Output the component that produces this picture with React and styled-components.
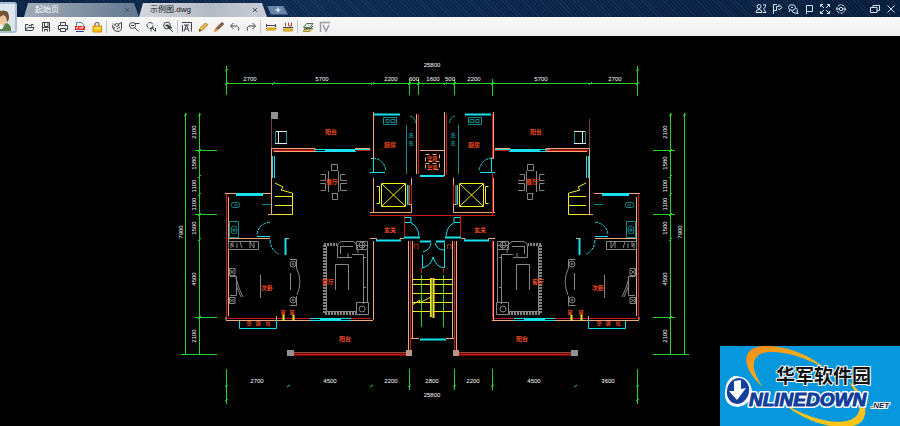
import React from "react";
import styled, { createGlobalStyle } from "styled-components";

const GlobalStyle = createGlobalStyle`
  * { box-sizing: border-box; }
  body {
    margin: 0;
    background: #000;
    font-family: "Liberation Sans", "Noto Sans CJK SC", sans-serif;
  }
`;

const Page = styled.div`
  min-height: 100vh;
  position: relative;
  display: flex;
  flex-direction: column;
  background: #000;
`;

const TitleBar = styled.header`
  display: flex;
  align-items: flex-end;
  height: 17px;
  padding-left: 24px;
  background:
    repeating-linear-gradient(45deg, rgba(90, 140, 200, 0.12) 0 1px, transparent 1px 3px),
    linear-gradient(90deg, #0a2140, #0e2a50 35%, #071c3a);
`;

const TabList = styled.nav`
  display: flex;
  align-items: flex-end;
`;

const Tab = styled.div`
  display: flex;
  align-items: center;
  width: ${(p) => (p.$active ? 128 : 115)}px;
  height: 14px;
  padding: 0 9px 0 11px;
  color: ${(p) => (p.$active ? "#101418" : "#fff")};
  background: ${(p) =>
    p.$active
      ? "linear-gradient(100deg, #d4d8de, #b4bac5 55%, #c9ced6)"
      : "linear-gradient(100deg, #a0acb9, #7c8c9f 60%, #627790)"};
  clip-path: polygon(4px 0, calc(100% - 5px) 0, 100% 100%, 0 100%);
`;

const TabLabel = styled.button`
  flex: 1;
  padding: 0;
  border: 0;
  background: none;
  color: inherit;
  font: 8px/12px "Liberation Sans", "Noto Sans CJK SC", sans-serif;
  text-align: left;
`;

const TabClose = styled.button`
  display: flex;
  padding: 0;
  border: 0;
  background: none;
  color: #4b5668;
`;

const NewTab = styled.button`
  display: flex;
  align-items: center;
  justify-content: center;
  align-self: center;
  width: 21px;
  height: 9px;
  padding: 0;
  border: 0;
  color: #fff;
  background: #6684a8;
  clip-path: polygon(0 0, 16px 0, 100% 100%, 4px 100%);
`;

const WindowTools = styled.div`
  display: flex;
  align-items: center;
  height: 17px;
  margin-left: auto;
  padding-right: 1px;
`;

const WindowButton = styled.button`
  display: flex;
  align-items: center;
  justify-content: center;
  width: 16px;
  height: 16px;
  margin-left: ${(p) => (p.$gap ? 18 : 0)}px;
  padding: 0;
  border: 0;
  background: none;
  color: #d5e3ef;
`;

const Avatar = styled.button`
  position: absolute;
  top: 2px;
  left: 0;
  width: 17px;
  height: 31px;
  padding: 0;
  border: 2px solid #a9bdd0;
  border-left: 0;
  border-radius: 0 3px 3px 0;
  background: #dce6ec;
  overflow: hidden;
`;

const Toolbar = styled.div`
  display: flex;
  align-items: center;
  height: 19px;
  padding-left: 20px;
  background: linear-gradient(#f8f8f6, #f0f0f2);
`;

const ToolGroup = styled.div`
  display: flex;
  padding-right: 1px;
  margin-right: 1px;
  border-right: ${(p) => (p.$last ? 0 : 1)}px solid #c2c2c6;
`;

const ToolButton = styled.button`
  display: flex;
  align-items: center;
  justify-content: center;
  width: ${(p) => (p.$narrow ? 16 : 17)}px;
  height: 13px;
  padding: 0;
  border: 0;
  background: none;
`;

const Canvas = styled.main`
  flex: 1;
  background: #000;
`;

const Drawing = styled.svg`
  display: block;
  width: 100%;
  height: auto;
`;

const Brand = styled.a`
  position: absolute;
  right: 0;
  bottom: 0;
  display: block;
  width: 180px;
  height: 80px;
  background: #0797dc;
`;

const BrandName = styled.text`
  font: 700 19px "Noto Sans CJK SC", sans-serif;
  fill: #111;
  stroke: #fff;
  stroke-width: 2px;
  stroke-linejoin: round;
  paint-order: stroke;
`;

const BrandWord = styled.text`
  font: italic 700 ${(p) => (p.$small ? 8 : 19)}px "Liberation Sans", sans-serif;
  fill: ${(p) => (p.$small ? "#15233b" : "#143f9b")};
  stroke: ${(p) => (p.$front ? "#143f9b" : "#fff")};
  stroke-width: ${(p) => (p.$front ? 1 : p.$small ? 2 : 4)}px;
  stroke-linejoin: round;
  paint-order: stroke;
`;

const Icon = ({ children, size = 12, color = "currentColor" }) => (
  <svg width={size} height={size} viewBox="0 0 12 12" fill="none" stroke={color} strokeWidth="1" aria-hidden="true">
    {children}
  </svg>
);

const INK = "#3c4248";

const toolGroups = [
  {
    name: "file",
    tools: [
      ["Open", <path d="M2.5 9.5V3.5H5L6 4.5H8.5V5.5M2.5 9.5L4.5 6.5H11L9.5 9.5ZM8 3.5H10V4.5" />],
      ["Save", <path d="M2.5 10.5V1.5H9.5V10.5M4.5 1.5V5.5H8M8 1.5V5.5M2.5 6.5H9.5M4.5 10.5V8.5H7.5V10.5" />],
      ["Print", <path d="M3.5 4V1.5H8.5V4M3 8.5H1.5V4.5H10.5V8.5H9M3.5 7.5H8.5V10.5H3.5Z" />],
      ["Export PDF", <><path d="M2.5 5V1.5H7.5L9.5 3.5V5" stroke="#4a83b8" /><path d="M1 5H11V9H1Z" fill="#e52822" stroke="none" /><path d="M3 8V6H4M6 6V8M8 8V6H9.5" stroke="#fff" /><path d="M2 10.5H10" stroke="#1f4c86" /></>],
      ["Lock", <><path d="M4 5V3Q4 1.5 6 1.5T8 3V5" stroke="#5b5140" /><path d="M2 5H10.5V11H2Z" fill="#f5c410" stroke="#d08b0e" /><path d="M3 7H9.5" stroke="#fff08a" /></>],
    ],
  },
  {
    name: "view",
    tools: [
      ["Pan", <path d="M2 2.5L4 4.5L5.5 2L7 3.5L10.5 1.5V5Q11 10 7 10.5Q3 10.5 2 7L4 6.5M2 7L1.5 4M5 6L8.5 4M6 8L9 6" />],
      ["Zoom out", <><circle cx="4.5" cy="4.5" r="3" /><path d="M7 7L10.5 10.5M7 2.5H11.5M3 4.5H6" /></>],
      ["Zoom in", <><circle cx="5" cy="4.5" r="3" strokeDasharray="5 1" /><path d="M7 7L10.5 10.5M6 10.5V7H9M10.5 7V10" /></>],
      ["Zoom extents", <><circle cx="5" cy="4.5" r="3.4" /><path d="M7 7L11 11M3 4.5H7M5 3V6" /><path d="M6 4L10 7H6Z" fill={INK} /></>],
    ],
  },
  {
    name: "edit",
    narrow: true,
    tools: [
      ["Text", <path d="M1 1.5H10.5V10.5M1.5 4V10.5M3 10.5L5.5 4L8 10.5M4 8H7M3 4H8" />],
      ["Draw", <><path d="M2 10L3 7.5L8.5 2L10.5 4L5 9.5Z" fill="#f3c64c" stroke="#a36b16" /><path d="M2 10L4 9" stroke="#333" /></>],
      ["Brush", <><path d="M2 10L3 7.5L9 1.5L10.5 3L5 8.5Z" fill="#9b6246" stroke="#58382b" /><path d="M1.5 10.5L4 8" stroke="#ef9b25" strokeWidth="2" /></>],
      ["Undo", <path d="M4.5 2L1.5 5L4.5 8M2 5H7Q10.5 5 9.5 9.5" />],
      ["Redo", <path d="M7.5 2L10.5 5L7.5 8M10 5H5Q1.5 5 2.5 9.5" />],
    ],
  },
  {
    name: "measure",
    tools: [
      ["Measure", <><path d="M1.5 4.5H10.5M1.5 3V6M10.5 3V6" /><path d="M1.5 7H10.5V9H1.5Z" fill="#f6c72d" stroke="#c99316" /></>],
      ["Dimension", <><path d="M3.5 5V1.5M6.5 5V1.5M9.5 1.5V5H7" stroke="#b8432b" /><path d="M1 6.5H11" /><path d="M1.5 8H10.5V10H1.5Z" fill="#f6c72d" stroke="#c99316" /></>],
    ],
  },
  {
    name: "display",
    tools: [
      ["Layers", <><path d="M1.5 9.5L4 7.5H11L8 10.5H1.5Z" fill="#f0dc66" stroke="#98893a" /><path d="M1.5 6.5L4.5 2.5H11L8 6.5Z" fill="#ddeadf" stroke="#55705b" /><path d="M2 8H8L11 5" /></>],
      ["VIP", <path d="M1.5 11V1.5H11M4 4L7 10L10 4" stroke="#979ba1" strokeWidth="1.5" />],
    ],
  },
];

const windowTools = [
  ["Contacts", <><circle cx="4" cy="3.5" r="2" /><path d="M1 9.5Q1 6.5 4 6.5T7 9.5ZM8 2L10.5 1.5V4L8.5 5.5L11 9.5H8" /></>],
  ["Share", <path d="M2.5 11V1.5H6M2.5 7.5H5.5V3.5H8V1.5L11 4.5L8 7V5.5" />],
  ["Messages", <><ellipse cx="5" cy="4.5" rx="3.5" ry="2.8" /><path d="M3 7L2 9M8.5 4.5Q11.5 6 10 9L11 10.5L8 10Q5 10 5 7.5M4 4.5H6" /></>],
  ["Flag", <path d="M3.5 11V2.5H9.5V8.5H3.5" />],
  ["Full screen", <path d="M1.5 4V1.5H4M2 2L5 5M8 1.5H10.5V4M10 2L7 5M1.5 8V10.5H4M2 10L5 7M8 10.5H10.5V8M10 10L7 7" />],
  ["Settings", <><circle cx="6" cy="6" r="4.2" strokeDasharray="3 1" /><circle cx="6" cy="6" r="1.7" /><path d="M1 6H4M8 6H11" /></>],
  ["Restore", <path d="M4 4V2.5H10.5V7.5H8M1.5 4.5H8V9.5H1.5Z" />],
  ["Close", <path d="M2.5 2.5L9.5 9.5M9.5 2.5L2.5 9.5" />],
];

const C = {
  wall: "#f0a878",
  red: "#c91816",
  cyan: "#19e0ee",
  teal: "#148b8e",
  yellow: "#f2ed20",
  green: "#23d42c",
  grey: "#858585",
  label: "#f04a20",
};

/* Upper balcony side wall, its air-conditioner shelf and the inner steps. */
const BalconySide = () => (
  <g fill="none">
    <path d="M271.500 119V150" stroke="#784242" />
    <path d="M273 150.500H315" stroke={C.red} strokeWidth="2" />
    <path d="M271.500 193V148.500H315V151.500H274M271.500 185V214.500M268 214.500H277" stroke={C.wall} />
    <path d="M272.500 156V178M274.500 156V178" stroke={C.cyan} />
    <path d="M275 196.500H292.500M275 205.500H292.500M275 214.500H292.500V193M275 183L283 187L281 190L292 193" stroke={C.yellow} />
    <path d="M275.500 131.500H286.500V143.500H275.500Z" stroke={C.teal} />
    <path d="M276 131.500H287M275 143.500H287M278.500 132V143" stroke="#d7eeee" />
  </g>
);

/* Wall between the living room or kitchen and the light well. */
const InnerWall = () => (
  <path d="M373.500 112V158M373.500 178V212M373.500 241V320" fill="none" stroke={C.wall} />
);

/* One apartment; the second one is its reflection about the stair core. */
const Apartment = () => (
  <g fill="none" strokeWidth="1">
    <g stroke={C.red}>
      <path d="M226.500 194V319M228 318.500H310M341 318.500H371M356 150.500H371" />
      <path d="M370 215.500H433M404.500 215V237M411.500 178V213M418.500 114V174M410.500 241V353" />
      <path d="M291 352.500H408" stroke="#8f4a3c" />
      <path d="M291 354.500H408" strokeWidth="2" />
    </g>
    <g stroke={C.wall}>
      <path d="M225 193.500H271M228.500 197V316M229 238.500H270M226 320.500H373M226 317V320" />
      <path d="M355 148.500H370M371 158.500H374" />
      <path d="M373 212.500H411.500V204.500H409M411.500 178V185M370 212.500H374M370 238.500H376.500V241M400 241V238.500H404M285 238.500H289M276.500 316V320M409 185V205M412.500 241V338M408.500 241V350" />
    </g>
    <g stroke={C.cyan}>
      <path d="M236 194.500H263" strokeWidth="3" />
      <path d="M374 114.500H400M320 319.500H341M325 150.500H355M376 240.500H401" strokeWidth="2" />
      <path d="M310 318.500H351M310 320.500H351M315 149.500H370M315 151.500H356" />
      <path d="M239.500 321V328.500H276.500V319M370 172.500H385" />
      <path d="M373 158Q384 159 386 171M270 222Q258 224 257 235M270 240Q271 251 279 254" strokeDasharray="3 1" />
      <path d="M257 236.500H270M373.500 158V173M407.500 185V205" />
      <path d="M285.500 238V255M404 237.500H420" strokeWidth="2" />
      <path d="M405 217.500H411V222.500H405M411 223Q418 226 419 236" />
    </g>
    <g stroke={C.yellow}>
      <path d="M381.500 183.500H405.500V206.500H381.500ZM382 184L405 206M405 184L382 206M376.500 186.500H379.500V203.500H376.500" />
      <path d="M283.500 315V321M293.500 315V321" strokeWidth="2" />
    </g>
    <g stroke={C.teal}>
      <path d="M383.500 117.500H396.500V124.500H383.500ZM386 119.500H389V122.500H386ZM391 119.500H395V122.500H391ZM406.500 125V174M410 116Q415 117 415.500 123" />
      <path d="M229.500 221.500H238.500V237.500H229.500Z" />
      <ellipse cx="234" cy="230" rx="3" ry="4" />
      <path d="M232 230H236M234 228V232" />
      <rect x="231.500" y="202.500" width="8" height="5" rx="2" />
      <path d="M234 205H238M262 204.500H271" />
    </g>
    <g stroke={C.grey}>
      <path d="M228.500 241.500H258.500V249.500H228.500ZM231 248V243L233 247V242M237 243V248M240 242L242 248M250 248V242L254 248V242" />
      <path d="M229.500 268.500H235V275.500H229.500ZM229.500 297.500H235V303.500H229.500ZM230 276.500H236.500V295.500H230M236 278L239 288L243 297M236 285L241 297M260.500 275V298" />
      <path d="M230 270L234 274M234 270L230 274M230 299L234 302M234 299L230 302" />
      <path d="M289.500 259.500H296.500V268.500M290.500 273V290M296.500 268Q303 281 297 295M289.500 305.500H296.500V296" />
      <circle cx="293" cy="264" r="3" /><circle cx="293" cy="264" r="1" />
      <circle cx="293" cy="300" r="3" /><circle cx="293" cy="300" r="1" />
      <path d="M324.500 245V314M324 244.500H337M325 313.500H356" strokeWidth="3" strokeDasharray="2 1" />
      <path d="M326.500 246V311.500H356M337.500 246V257.500H352M337.500 246Q338 241 344 241.500H353Q358 243 358 253M340.500 247V254M340 246.500H353" />
      <path d="M335.500 290V264.500H348.500V290M356.500 241.500H367.500V249.500H356.500ZM352 254.500H363.500V304M367.500 250V302M363 257.500H366M363 287.500H366M348 253V257" />
      <path d="M356.500 302.500H368.500V314.500H356.500Z" />
      <circle cx="362" cy="309" r="3" />
      <circle cx="362" cy="245" r="3" />
      <path d="M357 245.500H367M362.500 241V250" />
      <path d="M331.500 164.500H337.500V170.500H331.500ZM320.500 174.500H325.500V180.500H320.500M320.500 183.500H325.500V190.500H320.500M345.500 174.500H340.500V180.500H347M347 183.500H340.500V190.500H347M331.500 193.500H338M332.500 193V199.500H337.500V193M328.500 171V192M338.500 171V192" />
    </g>
    <g fill="#929292" stroke="none">
      <path d="M287 350H294V356H287Z" />
      <path d="M406 350H412V356H406Z" fill="#bb9484" />
    </g>
  </g>
);

const StairCore = () => (
  <g fill="none">
    <g stroke={C.wall}>
      <path d="M444.500 112V176M420 150.500H444M411 338.500H419M446 338.500H454M416.500 114V174" />
      <path d="M425.500 154.500H439.500V161.500H425.500ZM425.500 163.500H439.500V169.500H425.500Z" strokeDasharray="4 3" />
    </g>
    <g stroke={C.cyan}>
      <path d="M420 176H444M420 241.500H431M436 241.500H445M420 339.500H446" strokeWidth="2" />
      <path d="M431 243Q430 250 423 252M435 243Q437 250 444 250M422.500 255V268M444.500 243V268M422 268Q431 266 433 257Q436 267 444 268" />
    </g>
    <path d="M421.500 268V273M443.500 268V273" stroke={C.red} />
    <path d="M421.500 275V327M443.500 275V327" stroke={C.green} />
    <path d="M412 279.500H453M412 284.500H453M412 293.500H453M412 302.500H453M412 311.500H453M412 305L420 300L419 303L431 297" stroke={C.yellow} />
    <path d="M431 278V317M433.500 278V318" stroke={C.yellow} strokeWidth="2" />
    <path d="M432 279V316" stroke="#726f0b" />
  </g>
);

const DimensionLines = () => (
  <g fill="none" stroke={C.green}>
    <path d="M226 83.500H638M226.500 66V95M409.500 79V95M418.500 79V95M454.500 79V95M492.500 79V96M637.500 66V96" />
    <path d="M185.500 113V355M199.500 113V355M195 150.500H217M195 214.500H217M195 317.500H217M181 354.500H217" />
    <path d="M670.500 113V355M684.500 113V355M653 150.500H675M653 214.500H675M653 317.500H675M653 354.500H689" />
    <path d="M226.500 369V404M409.500 369V390M454.500 369V390M492.500 369V390M637.500 369V404" />
    <path d="M225 71L228 69M225 85L228 82M272 85L275 82M371 85L374 82M408 85L411 82M417 85L420 82M444 85L447 82M453 85L456 82M491 85L494 82M589 85L592 82M636 71L639 69M636 85L639 82M225 387L228 385M287 387L290 385M370 387L373 385M408 387L411 385M453 387L456 385M491 387L494 385M574 387L577 385M636 387L639 385M225 401L228 399M636 401L639 399" />
    <path d="M184 116L187 114M198 116L201 114M198 152L201 149M198 178L201 175M198 196L201 193M198 216L201 213M198 241L201 238M198 319L201 316M669 116L672 114M683 116L686 114M669 152L672 149M669 178L672 175M669 196L672 193M669 216L672 213M669 241L672 238M669 319L672 316" />
  </g>
);

const DimText = styled.text`
  font: 6px "Liberation Sans", sans-serif;
  fill: #fff;
  text-anchor: middle;
`;

const RoomText = styled.text`
  font: 700 ${(p) => (p.$small ? 5 : 6)}px "Noto Sans CJK SC", sans-serif;
  fill: ${(p) => (p.$teal ? C.teal : C.label)};
  text-anchor: middle;
`;

const horizontalDims = [
  ["25800", 432, 67], ["2700", 250, 81], ["5700", 322, 81], ["2200", 391, 81], ["600", 414, 81],
  ["1600", 433, 81], ["500", 450, 81], ["2200", 474, 81], ["5700", 541, 81], ["2700", 615, 81],
  ["2700", 257, 383], ["4500", 330, 383], ["2200", 391, 383], ["2800", 432, 383], ["2200", 473, 383],
  ["4500", 534, 383], ["3600", 608, 383], ["25800", 432, 397],
];

const verticalDims = [
  ["2100", 132], ["1580", 163], ["1100", 186], ["1100", 204], ["1500", 228], ["4500", 279], ["2100", 336],
];

const rooms = [
  ["阳台", 331, 134], ["阳台", 536, 134], ["厨房", 390, 147], ["厨房", 474, 147],
  ["餐厅", 332, 184], ["餐厅", 532, 184], ["玄关", 390, 232], ["玄关", 480, 232],
  ["客厅", 328, 284], ["客厅", 538, 284], ["次卧", 267, 290], ["次卧", 598, 290],
  ["阳台", 345, 341], ["阳台", 522, 341],
];

const notes = [
  ["空调", 432, 160], ["空调", 432, 169], ["门", 416, 248], ["门", 449, 248],
  ["窗", 283, 314], ["窗", 292, 314], ["窗", 570, 314], ["窗", 581, 314],
  ["空", 249, 325], ["调", 258, 325], ["位", 268, 325], ["空", 599, 325], ["调", 608, 325], ["位", 618, 325],
];

const FloorPlan = () => (
  <Drawing viewBox="0 36 900 390" role="img" aria-label="Floor plan">
    <DimensionLines />
    <Apartment />
    <InnerWall />
    <BalconySide />
    <path d="M271 112H278V119H271Z" fill="#929292" />
    <g transform="translate(865 0) scale(-1 1)"><Apartment /></g>
    <g transform="translate(867 0) scale(-1 1)"><InnerWall /></g>
    <g transform="translate(861 0) scale(-1 1)"><BalconySide /></g>
    <path d="M492.500 114V158M492.500 173V215M492.500 241V318" stroke={C.red} />
    <StairCore />
    {horizontalDims.map(([t, x, y]) => <DimText key={`${x}-${y}`} x={x} y={y}>{t}</DimText>)}
    {verticalDims.map(([t, y]) => (
      <React.Fragment key={y}>
        <DimText transform={`translate(196 ${y}) rotate(-90)`}>{t}</DimText>
        <DimText transform={`translate(667 ${y}) rotate(-90)`}>{t}</DimText>
      </React.Fragment>
    ))}
    <DimText transform="translate(183 232) rotate(-90)">7900</DimText>
    <DimText transform="translate(682 232) rotate(-90)">7900</DimText>
    {rooms.map(([t, x, y]) => <RoomText key={`${x}-${y}`} x={x} y={y}>{t}</RoomText>)}
    {notes.map(([t, x, y]) => <RoomText $small key={`${x}-${y}`} x={x} y={y}>{t}</RoomText>)}
    {[411, 453].map((x) => (
      <React.Fragment key={x}>
        <RoomText $small $teal x={x} y={137}>洗</RoomText>
        <RoomText $small $teal x={x} y={145}>衣</RoomText>
      </React.Fragment>
    ))}
  </Drawing>
);

const BrandLogo = () => (
  <svg width="180" height="80" viewBox="0 0 180 80" aria-hidden="true">
    <defs>
      <linearGradient id="swoosh" x1="0" y1="0" x2="1" y2="1">
        <stop offset="0" stopColor="#f28a18" />
        <stop offset="1" stopColor="#ffd21c" />
      </linearGradient>
    </defs>
    <path d="M43 41C21 22 20 1 44 0C66-1 89 9 105 22C87 12 65 5 49 6C31 7 29 22 43 41Z" fill="url(#swoosh)" />
    <path d="M63 57C83 70 113 80 130 74C145 69 141 51 128 35C148 49 151 74 136 79C115 86 81 74 63 57Z" fill="#ffc31a" />
    <BrandName x="56" y="37">华军软件园</BrandName>
    <path d="M14 30Q30 30 32 45Q31 59 18 61Q4 60 5 46Q6 33 14 30Z" fill="#fff" />
    <BrandWord x="29" y="60">NLINEDOWN</BrandWord>
    <BrandWord $front x="29" y="60" aria-hidden="true">NLINEDOWN</BrandWord>
    <BrandWord $small x="151" y="62">.NET</BrandWord>
    <ellipse cx="18" cy="45" rx="11" ry="13" fill="#143f9b" transform="rotate(15 18 45)" />
    <path d="M14 35L21 34V43L26 42L17 54L9 45H14Z" fill="#fff" />
  </svg>
);

const Cross = () => <Icon size={6}><path d="M2 2L10 10M10 2L2 10" strokeWidth="2" /></Icon>;

export default function App() {
  return (
    <Page>
      <GlobalStyle />
      <TitleBar>
        <TabList aria-label="Documents">
          <Tab>
            <TabLabel type="button">起始页</TabLabel>
            <TabClose type="button" aria-label="Close 起始页"><Cross /></TabClose>
          </Tab>
          <Tab $active>
            <TabLabel type="button" aria-current="page">示例图.dwg</TabLabel>
            <TabClose type="button" aria-label="Close 示例图.dwg"><Cross /></TabClose>
          </Tab>
          <NewTab type="button" aria-label="New tab"><Icon size={6}><path d="M6 1V11M1 6H11" strokeWidth="2" /></Icon></NewTab>
        </TabList>
        <WindowTools>
          {windowTools.map(([name, art]) => (
            <WindowButton key={name} type="button" aria-label={name} $gap={name === "Restore"}>
              <Icon>{art}</Icon>
            </WindowButton>
          ))}
        </WindowTools>
      </TitleBar>
      <Toolbar role="toolbar" aria-label="Drawing tools">
        {toolGroups.map((group, i) => (
          <ToolGroup key={group.name} $last={i === toolGroups.length - 1}>
            {group.tools.map(([name, art]) => (
              <ToolButton key={name} type="button" aria-label={name} $narrow={group.narrow}>
                <Icon color={INK}>{art}</Icon>
              </ToolButton>
            ))}
          </ToolGroup>
        ))}
      </Toolbar>
      <Avatar type="button" aria-label="Account">
        <svg width="15" height="27" viewBox="0 0 15 27" aria-hidden="true">
          <path d="M0 27V20Q9 17 11 24V27Z" fill="#568448" />
          <path d="M0 9Q6 8 7 14Q7 20 3 22H0Z" fill="#edc7a2" />
          <path d="M0 7Q9 5 9 13Q9 17 7 18Q7 12 3 11L0 13Z" fill="#735434" />
          <path d="M0 20L4 22L2 25H0Z" fill="#fff" />
        </svg>
      </Avatar>
      <Canvas><FloorPlan /></Canvas>
      <Brand href="#" aria-label="华军软件园 ONLINEDOWN.NET"><BrandLogo /></Brand>
    </Page>
  );
}
